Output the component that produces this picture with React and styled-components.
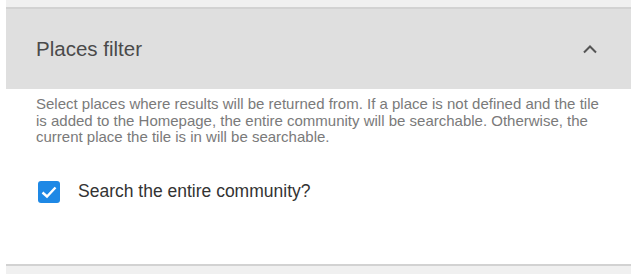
import React from "react";
import styled, { createGlobalStyle } from "styled-components";

const Global = createGlobalStyle`
  html, body { margin: 0; padding: 0; background: #fff; }
  body { font-family: "Liberation Sans", Arial, sans-serif; }
`;

const Page = styled.div`
  width: 625px;
  margin-left: 6px;
  display: flex;
  flex-direction: column;
`;

const Neighbour = styled.div`
  background: #f0f0f0;
  height: ${(p) => p.$h}px;
  border-${(p) => (p.$top ? "bottom" : "top")}: 2px solid #d2d2d2;
`;

const Header = styled.div`
  height: 80px;
  background: #dfdfdf;
  display: flex;
  align-items: center;
  justify-content: space-between;
  padding: 0 33px 0 30px;
  box-sizing: border-box;
`;

const Title = styled.h2`
  margin: 0;
  font-family: "Liberation Sans", Arial, sans-serif;
  font-size: 20.5px;
  font-weight: 400;
  color: #4a4a4a;
`;

const Body = styled.div`
  padding: 7px 24px 0 30px;
  height: 175px;
  box-sizing: border-box;
`;

const Desc = styled.p`
  margin: 0;
  font-family: "Liberation Sans", Arial, sans-serif;
  font-size: 15px;
  line-height: 16.5px;
  color: #7a7a7a;
`;

const CheckRow = styled.label`
  display: flex;
  align-items: center;
  gap: 18px;
  margin-top: 35px;
  padding-left: 2px;
  font-family: "Liberation Sans", Arial, sans-serif;
  font-size: 17.5px;
  color: #333;
`;

const Box = styled.span`
  width: 22px;
  height: 22px;
  flex: none;
  border-radius: 3px;
  background: #1e88e5;
  display: flex;
  align-items: center;
  justify-content: center;
`;

export default function App() {
  return (
    <>
      <Global />
      <Page>
        <Neighbour $top $h={7} />
        <Header>
          <Title>Places filter</Title>
          <svg width="16" height="10" viewBox="0 0 16 10">
            <path d="M2 8.5 L8 2.5 L14 8.5" fill="none" stroke="#555" strokeWidth="2" />
          </svg>
        </Header>
        <Body>
          <Desc>
            Select places where results will be returned from. If a place is not defined and the tile
            is added to the Homepage, the entire community will be searchable. Otherwise, the
            current place the tile is in will be searchable.
          </Desc>
          <CheckRow>
            <Box>
              <svg width="22" height="22" viewBox="0 0 22 22">
                <path d="M4.5 11.5 L9 15.5 L17.5 6.5" fill="none" stroke="#fff" strokeWidth="2.4" />
              </svg>
            </Box>
            Search the entire community?
          </CheckRow>
        </Body>
        <Neighbour $h={10} />
      </Page>
    </>
  );
}
